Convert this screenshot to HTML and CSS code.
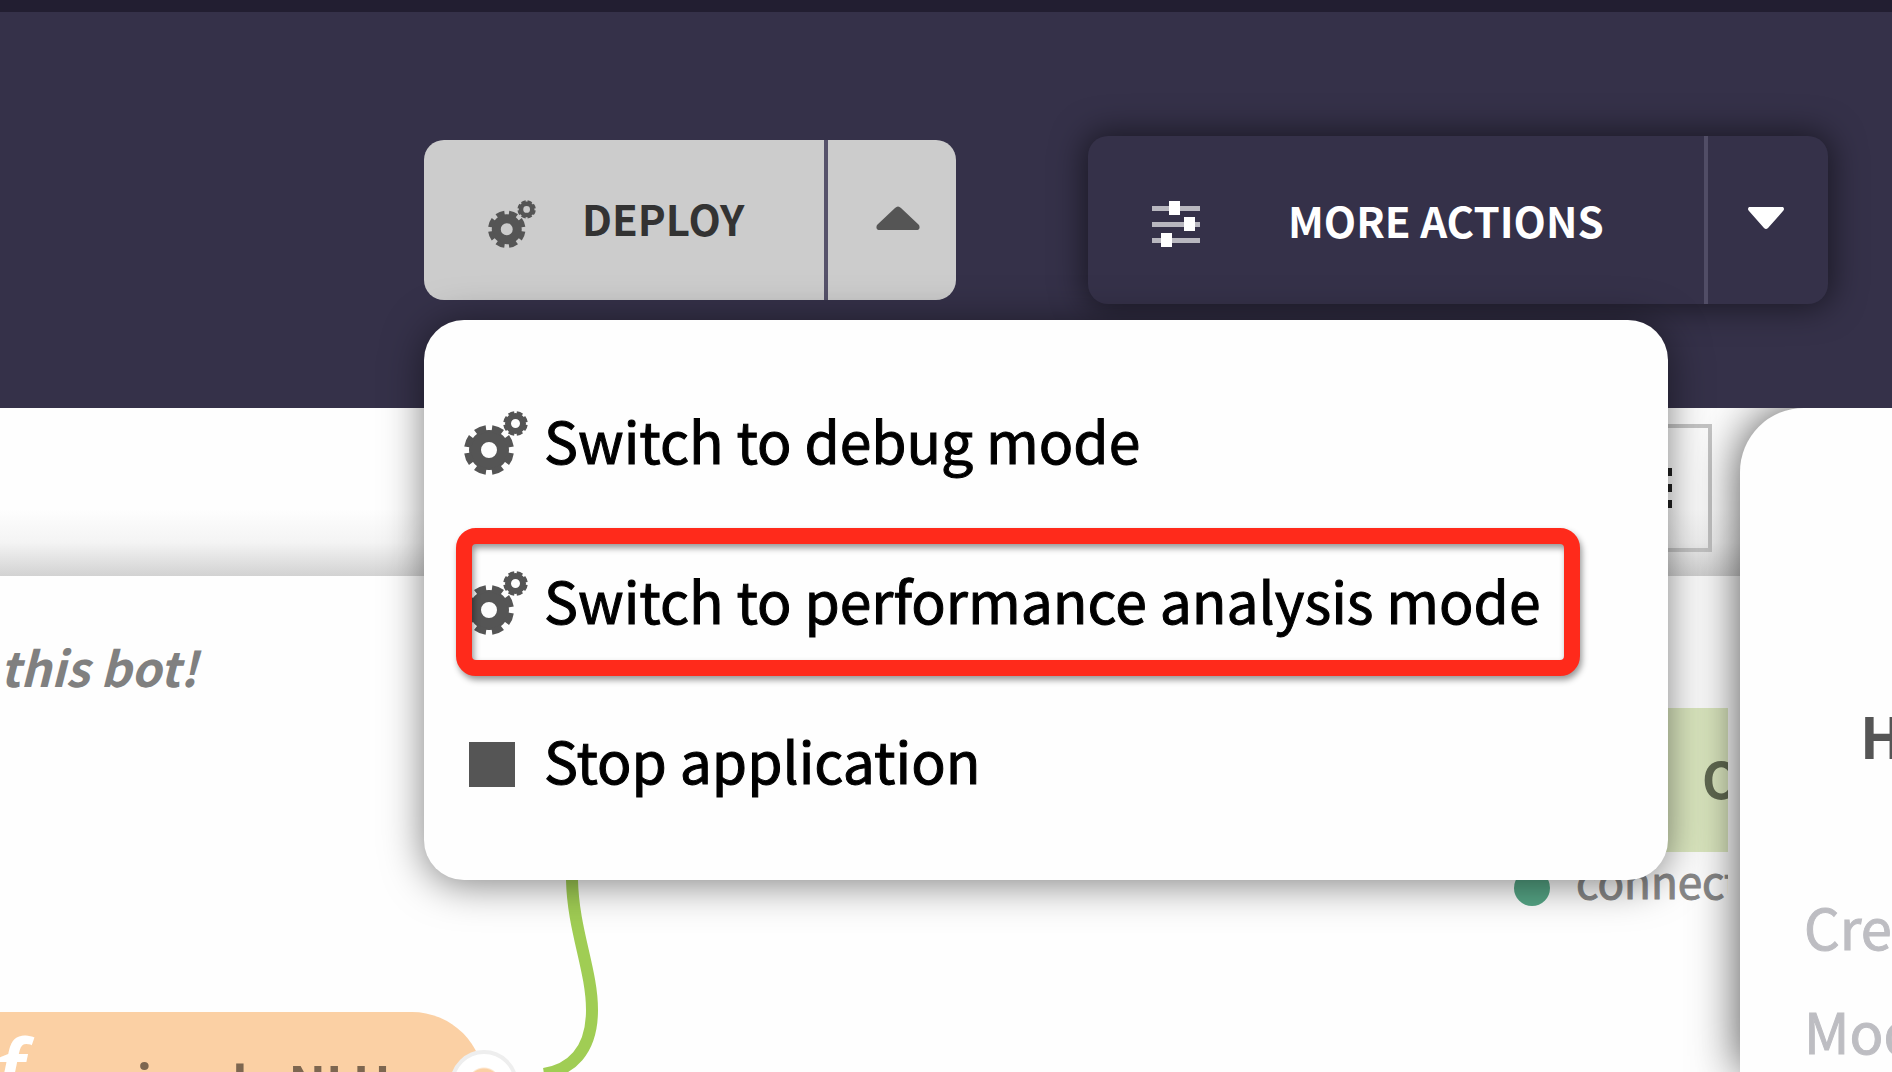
FILE: index.html
```html
<!DOCTYPE html>
<html lang="en">
<head>
<meta charset="utf-8">
<title>Bot designer</title>
<link rel="stylesheet" href="styles.css">
</head>
<body>
<svg class="sprite" aria-hidden="true">
  <symbol id="gears" viewBox="0 0 64 64">
    <g fill="none" stroke="currentColor">
      <circle cx="25" cy="39" r="14" stroke-width="12"/>
      <circle cx="25" cy="39" r="21.5" stroke-width="7" pathLength="80" stroke-dasharray="6.4 3.6" stroke-dashoffset="-1.8"/>
      <circle cx="51.5" cy="12.5" r="7.5" stroke-width="6"/>
      <circle cx="51.5" cy="12.5" r="10.5" stroke-width="3.5" pathLength="80" stroke-dasharray="7 3" stroke-dashoffset="-1.5"/>
    </g>
  </symbol>
</svg>
<header class="header">
  <div class="split deploy">
    <button class="main" type="button"><svg class="icon"><use href="#gears"/></svg><span>DEPLOY</span></button>
    <button class="toggle" type="button" aria-label="Deploy options"><svg width="44" height="24" viewBox="0 0 44 24"><path d="M19 2q3-3 6 0l18 17q2 5-3 5H4q-5 0-3-5z"/></svg></button>
    <ul class="menu">
      <li><button type="button"><svg class="icon"><use href="#gears"/></svg><span>Switch to debug mode</span></button></li>
      <li class="marked"><button type="button"><svg class="icon"><use href="#gears"/></svg><span>Switch to performance analysis mode</span></button></li>
      <li><button type="button"><svg class="icon" viewBox="0 0 64 64"><path d="M5 11h46v45H5z"/></svg><span>Stop application</span></button></li>
    </ul>
  </div>
  <div class="split more">
    <button class="main" type="button"><svg class="icon" viewBox="0 0 48 48"><path opacity=".65" d="M0 6h48v5H0zM0 22h48v5H0zM0 38h48v5H0z"/><path d="M17 1h11v14H17zM32 17h11v14H32zM9 33h11v14H9z"/></svg><span>MORE ACTIONS</span></button>
    <button class="toggle" type="button" aria-label="More options"><svg width="36" height="22" viewBox="0 0 36 22"><path d="M1 0h34q2 2 0 4L20 21q-2 2-4 0L1 4q-2-2 0-4z"/></svg></button>
  </div>
</header>
<div class="workspace">
  <div class="editor">
    <div class="toolbar"><button type="button" class="list" aria-label="List"><svg width="40" height="44" viewBox="0 0 40 44"><path d="M32 2h6v8h-6zM32 18h6v8h-6zM32 34h6v8h-6z"/></svg></button></div>
    <main class="canvas">
      <p class="note">this bot!</p>
      <svg class="wire" width="80" height="240" viewBox="0 0 80 240"><path d="M32 0V40C33 90 52 130 52 170C52 212 30 230 4 234"/></svg>
      <div class="node output">O</div>
      <div class="status"><i></i>connected</div>
      <div class="node nlu"><span class="fn">f</span><span class="label">simple NLU</span><i class="port"></i></div>
    </main>
  </div>
  <aside class="panel">
    <h2>Help</h2>
    <p>Created</p>
    <p>Modified</p>
  </aside>
</div>
</body>
</html>
```
FILE: styles.css
```css
* { box-sizing: border-box; }
body {
  margin: 0;
  height: 100vh;
  overflow: hidden;
  display: flex;
  flex-direction: column;
  background: #fefefe;
  font-family: "Noto Sans CJK SC", "Open Sans", sans-serif;
}
button { margin: 0; padding: 0; border: 0; background: none; font: inherit; color: inherit; }
svg { display: block; flex: none; fill: currentColor; }
.sprite { position: absolute; width: 0; height: 0; }

.header {
  position: relative;
  z-index: 2;
  flex: none;
  height: 408px;
  padding: 124px 64px 0 424px;
  border-top: 12px solid #221e31;
  background: #353149;
  display: flex;
  justify-content: space-between;
  align-items: flex-start;
}
.split { position: relative; display: flex; border-radius: 20px; font-weight: 700; font-size: 42px; line-height: 64px; }
.split .main { display: flex; align-items: center; padding: 8px 0 0 64px; }
.split .main .icon { width: 48px; height: 48px; }
.split .main span { padding-bottom: 8px; }
.toggle { display: flex; align-items: center; justify-content: center; padding-bottom: 4px; }
.deploy { width: 532px; height: 160px; margin-top: 4px; background: #ccc; color: #333; }
.deploy .main { width: 404px; gap: 46px; border-right: 4px solid #56526a; }
.deploy .toggle { flex: 1; padding-left: 12px; }
.deploy svg { color: #555; }
.deploy .main span { padding-bottom: 12px; }
.more { z-index: -1; width: 740px; height: 168px; background: #353149; color: #fff; box-shadow: 0 0 32px 4px rgba(0, 0, 0, .5); }
.more .main { width: 620px; gap: 88px; border-right: 4px solid #514d66; }
.more .toggle { flex: 1; padding-right: 4px; }

.menu {
  position: absolute;
  top: 180px;
  left: 0;
  width: 1244px;
  height: 560px;
  margin: 0;
  padding: 48px 32px;
  list-style: none;
  border-radius: 40px;
  background: #fefefe;
  box-shadow: 0 4px 40px rgba(0, 0, 0, .5);
  color: #000;
  font-weight: 400;
  font-size: 57px;
  -webkit-text-stroke: 1px #000;
}
.menu li { width: 1124px; height: 148px; margin-bottom: 12px; }
.menu button { display: flex; align-items: center; gap: 16px; height: 100%; padding: 2px 0 0 8px; white-space: nowrap; }
.menu .icon { width: 64px; height: 64px; }
.menu span { padding-bottom: 9px; }
.marked { position: relative; }
.marked::after {
  content: "";
  position: absolute;
  inset: 0;
  border: 16px solid #ff2a1b;
  border-radius: 20px;
  filter: drop-shadow(2px 4px 3px rgba(0, 0, 0, .4));
}

.workspace { flex: 1; min-height: 0; display: flex; }
.editor { flex: 1; min-width: 0; display: flex; flex-direction: column; }
.toolbar {
  height: 168px;
  padding: 16px 28px;
  display: flex;
  justify-content: flex-end;
  background: linear-gradient(#fefefe 60%, #f4f4f4 80%, #d2d2d2);
}
.list { width: 128px; height: 128px; border: 4px solid #c6c6c6; color: #222; padding-left: 46px; }
.canvas { position: relative; flex: 1; min-height: 0; overflow: hidden; margin-right: 12px; }
.note { margin: 54px 0 0; font: italic 700 48px/72px "Noto Sans CJK SC", sans-serif; color: #808080; }
.node { position: absolute; font-weight: 700; font-size: 50px; line-height: 138px; }
.output { top: 132px; right: 0; width: 200px; height: 144px; padding-left: 174px; overflow: hidden; background: #dde9c1; color: #626b53; }
.status { position: absolute; top: 272px; left: 1514px; display: flex; align-items: center; gap: 26px; font-size: 44px; line-height: 64px; color: #888; -webkit-text-stroke: 1px #888; }
.status i { width: 36px; height: 36px; margin-top: 16px; border-radius: 50%; background: #55a585; }
.wire { position: absolute; left: 540px; top: 264px; fill: none; stroke: #a0cd54; stroke-width: 12px; }
.nlu { top: 436px; left: -200px; width: 684px; height: 144px; border-radius: 80px; background: #fbd0a4; color: #7d6650; }
.nlu .label { position: absolute; left: 312px; top: 0; white-space: nowrap; }
.fn { position: absolute; left: 195px; top: 7px; font: italic 600 84px/100px "Noto Sans", sans-serif; color: #fff; }
.port { position: absolute; right: -34px; top: 38px; width: 68px; height: 68px; border: 4px solid #eee; border-radius: 50%; background: radial-gradient(circle, #fbd0a4 15px, #fff 17px); }
.panel {
  position: relative;
  z-index: 1;
  width: 152px;
  padding: 286px 0 0 64px;
  overflow: hidden;
  border-radius: 64px 0 0 0;
  background: #fefefe;
  box-shadow: 0 0 48px rgba(0, 0, 0, .7);
  font-size: 56px;
  color: #bdbdc2;
}
.panel h2 { margin: 0 0 112px 56px; font-size: 57px; line-height: 80px; color: #555; }
.panel p { margin: 0 0 24px; line-height: 80px; -webkit-text-stroke: 1px #bdbdc2; }
```
